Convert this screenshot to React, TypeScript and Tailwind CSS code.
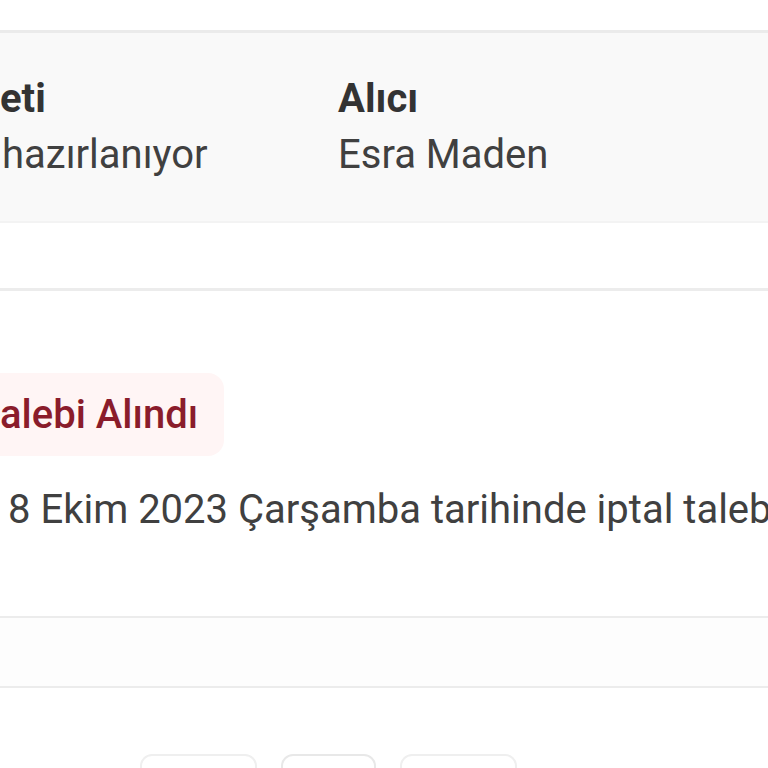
export default function App() {
  return (
    <div className="w-[768px] h-[768px] overflow-hidden bg-white font-['Roboto','Liberation_Sans',sans-serif] text-[40px] text-[#404040]">
      <div className="h-[30px]" />

      {/* Order summary panel */}
      <div className="border-t-[3px] border-b-2 border-t-[#ebebeb] border-b-[#f3f3f3] bg-[#f9f9f9] pt-[39px] pb-[40px]">
        <div className="flex leading-[53px] whitespace-nowrap">
          <div className="w-[338px] shrink-0">
            <div className="font-bold text-[#333]">eti</div>
            <div className="mt-[3px] pl-[2px]">hazırlanıyor</div>
          </div>
          <div>
            <div className="font-bold text-[#333]">Alıcı</div>
            <div className="mt-[3px]">Esra Maden</div>
          </div>
        </div>
      </div>

      <div className="h-[65px]" />
      <div className="border-t-[3px] border-[#ececec]" />

      {/* Cancel request */}
      <div className="pt-[82px]">
        <div className="inline-flex h-[83px] items-center rounded-r-2xl bg-[#fff5f5] pr-[26px] font-medium text-[#8a1c2b] whitespace-nowrap">
          alebi Alındı
        </div>
        <div className="mt-[27px] pl-[8px] leading-[53px] whitespace-nowrap">
          8 Ekim 2023 Çarşamba tarihinde iptal talebi alındı.
        </div>
      </div>

      <div className="mt-[80px] h-[72px] border-y-2 border-[#ececec] bg-[#fdfdfd]" />

      {/* Pagination buttons */}
      <div className="mt-[66px] flex gap-[24px] pl-[140px]">
        <div className="h-[48px] w-[117px] rounded-xl border-2 border-[#efefef] bg-white" />
        <div className="h-[48px] w-[95px] rounded-xl border-2 border-[#e8e8e8] bg-white" />
        <div className="h-[48px] w-[117px] rounded-xl border-2 border-[#efefef] bg-white" />
      </div>
    </div>
  )
}
